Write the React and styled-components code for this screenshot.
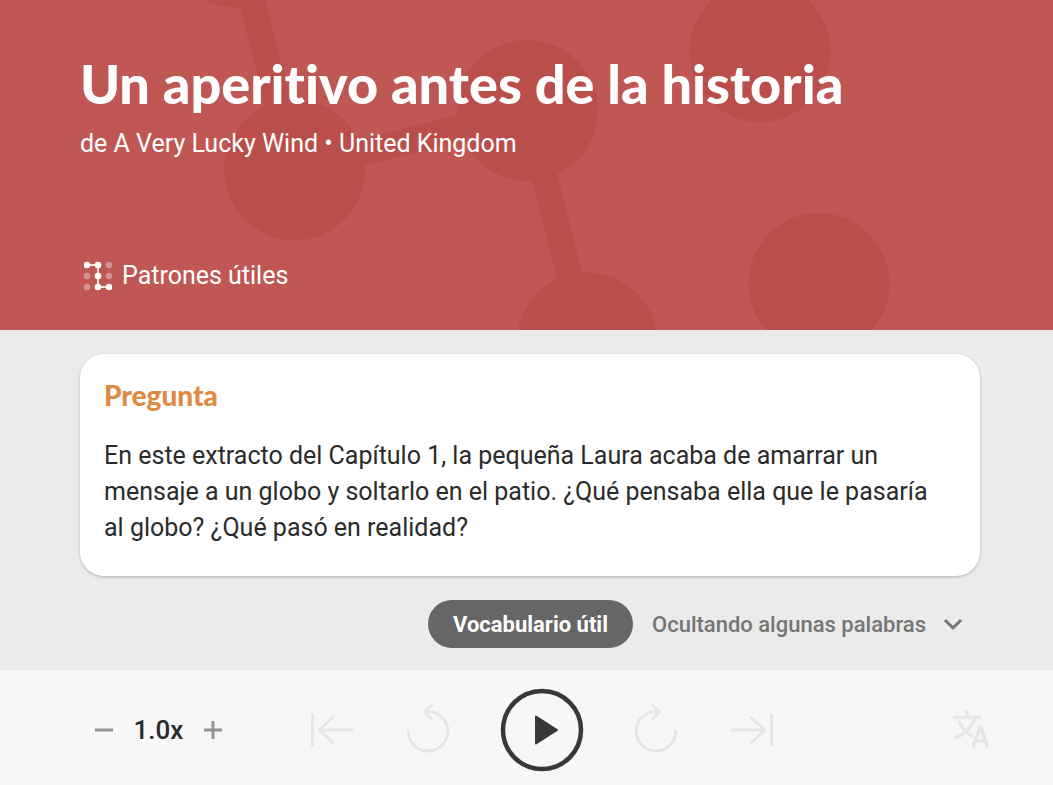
import React, { useState } from "react";
import styled, { createGlobalStyle } from "styled-components";

const GlobalStyle = createGlobalStyle`
  *, *::before, *::after { box-sizing: border-box; }
  body { margin: 0; background: #ebebeb; }
  body, button, select { font-family: Roboto, "Liberation Sans", sans-serif; }
  h1, h2, p { margin: 0; }
`;

const Page = styled.div`
  min-height: 100vh;
  display: flex;
  flex-direction: column;
  color: #2b2b2b;
`;

const Hero = styled.header`
  position: relative;
  overflow: hidden;
  min-height: 330px;
  padding: 48px 73px 36px 80px;
  display: flex;
  flex-direction: column;
  background: #bf5855;
  color: #fff;
`;

const Pattern = styled.svg`
  position: absolute;
  top: 0;
  left: 0;
  fill: #ba4e4a;
  stroke: #ba4e4a;
`;

const HeroBody = styled.div`
  position: relative;
  flex: 1;
  display: flex;
  flex-direction: column;
  align-items: flex-start;
`;

const Title = styled.h1`
  font-family: Lato, "Open Sans", sans-serif;
  font-size: 54px;
  font-weight: 900;
  line-height: 72px;
  font-variant-ligatures: none;
`;

const Subtitle = styled.p`
  margin-top: 6px;
  font-size: 25px;
  line-height: 36px;
`;

const PatternsLink = styled.a`
  margin-top: auto;
  padding-left: 4px;
  display: flex;
  align-items: center;
  gap: 10px;
  font-size: 25px;
  line-height: 36px;
  color: inherit;
  text-decoration: none;
`;

const Main = styled.main`
  flex: 1;
  padding: 24px 73px 22px 80px;
  display: flex;
  flex-direction: column;
  gap: 24px;
  background: #ebebeb;
`;

const Card = styled.section`
  padding: 24px 40px 30px 24px;
  border-radius: 24px;
  background: #fff;
  box-shadow: 0 1px 3px rgba(0, 0, 0, 0.25);
  display: flex;
  flex-direction: column;
  gap: 26px;
`;

const CardTitle = styled.h2`
  font-family: Lato, "Open Sans", sans-serif;
  font-size: 28px;
  font-weight: 900;
  line-height: 34px;
  color: #de8a43;
`;

const CardText = styled.p`
  font-size: 25px;
  line-height: 36px;
`;

const Options = styled.div`
  display: flex;
  justify-content: flex-end;
  gap: 19px;
`;

const PillButton = styled.button`
  height: 48px;
  padding: 0 25px;
  border: 0;
  border-radius: 24px;
  background: #666;
  color: #fff;
  font-size: 22px;
  font-weight: 700;
  cursor: pointer;
`;

const SelectBox = styled.div`
  position: relative;
  display: flex;
`;

const Select = styled.select`
  appearance: none;
  height: 48px;
  padding: 0 54px 0 0;
  border: 0;
  background: transparent;
  color: #757575;
  font-size: 22px;
  font-weight: 500;
  cursor: pointer;
`;

const Chevron = styled.svg`
  position: absolute;
  right: 17px;
  top: 14px;
  pointer-events: none;
`;

const Player = styled.footer`
  padding: 18px 49px 13px 80px;
  display: grid;
  grid-template-columns: 1fr auto 1fr;
  align-items: center;
  background: #f7f7f7;
`;

const Speed = styled.div`
  display: flex;
  align-items: center;
`;

const SpeedValue = styled.output`
  width: 61px;
  text-align: center;
  font-size: 26px;
  font-weight: 500;
  line-height: 36px;
`;

const Transport = styled.div`
  display: flex;
  align-items: center;
  gap: 12px;
`;

const IconButton = styled.button`
  width: ${(p) => p.$width || 84}px;
  height: ${(p) => p.$height || 84}px;
  margin: 0 ${(p) => p.$margin || 0}px;
  padding: 0;
  border: 0;
  background: none;
  color: ${(p) => p.$color || "#e6e6e6"};
  display: flex;
  align-items: center;
  justify-content: center;
  justify-self: ${(p) => p.$align || "auto"};
  cursor: pointer;
`;

const SkipIcon = ({ flip }) => (
  <svg width="44" height="44" viewBox="0 0 44 44" fill="none" stroke="currentColor" strokeWidth="3" aria-hidden="true">
    <g transform={flip ? "translate(44 0) scale(-1 1)" : undefined}>
      <path d="M2.5 5.5V38.5" />
      <path d="M43 22H9" />
      <path d="M23.5 8.5L9.5 22L23.5 35.5" strokeLinejoin="round" />
    </g>
  </svg>
);

const TurnIcon = ({ flip }) => (
  <svg width="44" height="56" viewBox="0 0 44 56" fill="none" stroke="currentColor" strokeWidth="3" strokeLinecap="round" aria-hidden="true">
    <g transform={flip ? "translate(44 0) scale(-1 1)" : undefined}>
      <path d="M2.2 29A19.8 19.8 0 1 0 22 9.4H19.5" />
      <path d="M25.5 3.5L18.5 10L25.5 17" strokeLinejoin="round" />
    </g>
  </svg>
);

const dotXs = [3, 14, 25];
const dotYs = [4, 15, 26];
const isLit = (col, row) => col === 1 || (col === 0 && row === 0) || (col === 2 && row === 2);

const PatternIcon = () => (
  <svg width="28" height="30" viewBox="0 0 28 30" fill="#fff" aria-hidden="true">
    <path d="M3 4H14V26H25" fill="none" stroke="#fff" strokeOpacity="0.8" strokeWidth="2" />
    {dotYs.map((y, row) =>
      dotXs.map((x, col) => (
        <circle key={`${x}-${y}`} cx={x} cy={y} r="3.3" fillOpacity={isLit(col, row) ? 1 : 0.35} />
      ))
    )}
  </svg>
);

export default function App() {
  const [speed, setSpeed] = useState(1);
  return (
    <Page>
      <GlobalStyle />
      <Hero>
        <Pattern width="1053" height="330" viewBox="0 0 1053 330" aria-hidden="true">
          <path d="M236 -63L294.5 170L527.5 110.5L587 343" fill="none" strokeWidth="26" />
          <g stroke="none">
            <circle cx="236" cy="-63" r="70.5" />
            <circle cx="294.5" cy="170" r="70.5" />
            <circle cx="527.5" cy="110.5" r="70.5" />
            <circle cx="587" cy="343" r="70.5" />
            <circle cx="760" cy="51.5" r="70.5" />
            <circle cx="819" cy="283.5" r="70.5" />
          </g>
        </Pattern>
        <HeroBody>
          <Title>Un aperitivo antes de la historia</Title>
          <Subtitle>de A Very Lucky Wind • United Kingdom</Subtitle>
          <PatternsLink href="#patrones">
            <PatternIcon />
            Patrones útiles
          </PatternsLink>
        </HeroBody>
      </Hero>
      <Main>
        <Card>
          <CardTitle>Pregunta</CardTitle>
          <CardText>
            En este extracto del Capítulo 1, la pequeña Laura acaba de amarrar un mensaje a un globo y soltarlo en el
            patio. ¿Qué pensaba ella que le pasaría al globo? ¿Qué pasó en realidad?
          </CardText>
        </Card>
        <Options>
          <PillButton type="button">Vocabulario útil</PillButton>
          <SelectBox>
            <Select aria-label="Palabras ocultas">
              <option>Ocultando algunas palabras</option>
            </Select>
            <Chevron width="20" height="20" viewBox="0 0 20 20" fill="none" stroke="#757575" strokeWidth="3" aria-hidden="true">
              <path d="M2 6L10 14L18 6" />
            </Chevron>
          </SelectBox>
        </Options>
      </Main>
      <Player>
        <Speed>
          <IconButton type="button" aria-label="Más lento" $width={48} $height={48} $color="#949494" onClick={() => setSpeed((s) => Math.max(0.5, s - 0.1))}>
            <svg width="18" height="18" viewBox="0 0 18 18" fill="none" stroke="currentColor" strokeWidth="3">
              <path d="M0 9H18" />
            </svg>
          </IconButton>
          <SpeedValue>{speed.toFixed(1)}x</SpeedValue>
          <IconButton type="button" aria-label="Más rápido" $width={48} $height={48} $color="#949494" onClick={() => setSpeed((s) => Math.min(2, s + 0.1))}>
            <svg width="18" height="18" viewBox="0 0 18 18" fill="none" stroke="currentColor" strokeWidth="3">
              <path d="M0 9H18M9 0V18" />
            </svg>
          </IconButton>
        </Speed>
        <Transport>
          <IconButton type="button" aria-label="Ir al inicio"><SkipIcon /></IconButton>
          <IconButton type="button" aria-label="Retroceder"><TurnIcon /></IconButton>
          <IconButton type="button" aria-label="Reproducir" $margin={18} $color="#383838">
            <svg width="84" height="84" viewBox="0 0 84 84" aria-hidden="true">
              <circle cx="42" cy="42" r="39" fill="none" stroke="currentColor" strokeWidth="4.5" />
              <path d="M36 28.5L57 42L36 55.5Z" fill="currentColor" stroke="currentColor" strokeWidth="2" strokeLinejoin="round" />
            </svg>
          </IconButton>
          <IconButton type="button" aria-label="Avanzar"><TurnIcon flip /></IconButton>
          <IconButton type="button" aria-label="Ir al final"><SkipIcon flip /></IconButton>
        </Transport>
        <IconButton type="button" aria-label="Traducir" $width={66} $height={66} $align="end">
          <svg width="42" height="42" viewBox="0 0 42 42" fill="none" stroke="currentColor" strokeWidth="3.5" aria-hidden="true">
            <path d="M3 8.5H31M17 1.5V8.5M25 9C22 18 14 26 4 29.5M9 12C12 20 17 25 23 27.5" />
            <path d="M23 38.5L30 18H31L37.5 38.5M25.5 32H35.5" />
          </svg>
        </IconButton>
      </Player>
    </Page>
  );
}
